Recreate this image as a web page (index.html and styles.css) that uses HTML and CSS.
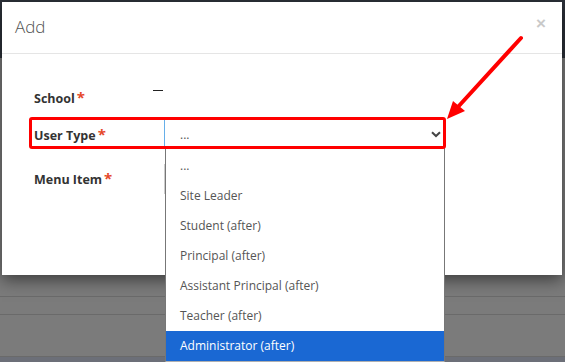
FILE: index.html
```html
<!DOCTYPE html>
<html lang="en">
<head>
    <meta charset="UTF-8">
    <meta name="viewport" content="width=device-width, initial-scale=1.0">
    <title>Add</title>
    <link rel="stylesheet" href="styles.css">
</head>
<body>
    <div class="page">
        <div class="modal">
            <div class="modal-header">
                <h4>Add</h4>
                <button class="close">&times;</button>
            </div>
            <div class="modal-body">
                <div class="form-row row-school">
                    <label>School<span class="req">*</span></label>
                    <div class="field"><span class="value-dash"></span></div>
                </div>
                <div class="form-row row-type">
                    <label>User Type<span class="req">*</span></label>
                    <div class="field">
                        <div class="select">
                            <span>...</span>
                            <svg class="chevron" width="10" height="7" viewBox="0 0 10 7">
                                <path d="M1 1.2 L5 5 L9 1.2" fill="none" stroke="#444" stroke-width="2"/>
                            </svg>
                        </div>
                    </div>
                </div>
                <div class="form-row row-menu">
                    <label>Menu Item<span class="req">*</span></label>
                    <div class="field"><div class="input"></div></div>
                </div>
            </div>
        </div>

        <div class="bg-rows">
            <div class="bg-row r1"></div>
            <div class="bg-row r2"></div>
            <div class="bg-row r3"></div>
        </div>

        <!-- open dropdown of the User Type select -->
        <ul class="dropdown">
            <li>...</li>
            <li>Site Leader</li>
            <li>Student (after)</li>
            <li>Principal (after)</li>
            <li>Assistant Principal (after)</li>
            <li>Teacher (after)</li>
            <li class="selected">Administrator (after)</li>
        </ul>

        <!-- annotation -->
        <div class="highlight"></div>
        <svg class="arrow" width="565" height="362" viewBox="0 0 565 362">
            <line x1="521" y1="38" x2="457" y2="108" stroke="#f00" stroke-width="4" stroke-linecap="round"/>
            <polygon points="447,119 453,101 465,111" fill="#f00"/>
        </svg>
    </div>
</body>
</html>
```

FILE: styles.css
```css
body {
    margin: 0;
    padding: 0;
    font-family: "Open Sans", Arial, sans-serif;
    background: #7b7b7b;
}
.page {
    position: relative;
    width: 565px;
    height: 362px;
    overflow: hidden;
    background: linear-gradient(#2c3139 0, #2c3139 58px, #7b7b7b 58px);
}
.modal {
    position: relative;
    z-index: 2;
    margin: 2px 3px 0 2px;
    height: 273px;
    background-color: #fff;
    box-shadow: 0 5px 15px rgba(0, 0, 0, 0.5);
}
.modal-header {
    display: flex;
    justify-content: space-between;
    align-items: flex-start;
    height: 51px;
    padding: 0 16px 0 13px;
    border-bottom: 1px solid #e5e5e5;
}
.modal-header h4 {
    margin: 13px 0 0 0;
    font-size: 17px;
    font-weight: 300;
    color: #555;
    line-height: 24px;
}
.close {
    margin-top: 12px;
    padding: 0;
    border: none;
    background: none;
    font-family: Arial, sans-serif;
    font-size: 17px;
    font-weight: bold;
    color: #c9c9c9;
    line-height: 20px;
}
.modal-body {
    padding: 29px 0 0 32px;
}
.form-row {
    display: flex;
    height: 28px;
    align-items: center;
}
.row-school {
    margin-bottom: 9px;
}
.row-type {
    margin-bottom: 16px;
}
.form-row label {
    width: 130px;
    font-size: 12.5px;
    font-weight: bold;
    color: #333;
}
.req {
    color: #e5482a;
    margin-left: 2px;
    font-size: 15px;
}
.field {
    flex: 1;
    height: 100%;
    margin-right: 117px;
}
.value-dash {
    display: block;
    width: 10px;
    height: 1px;
    margin: 7px 0 0 -11px;
    background-color: #222;
}
.select {
    display: flex;
    justify-content: space-between;
    align-items: center;
    height: 28px;
    box-sizing: border-box;
    padding: 0 4px 0 15px;
    border-left: 1px solid #66afe9;
    font-size: 12px;
    color: #555;
}
.input {
    height: 30px;
    box-sizing: border-box;
    border: 1px solid #ccc;
    border-width: 1px 1px 1px 2px;
}
.bg-row {
    border-bottom: 1px solid #6a6a6a;
}
.r1 { height: 21px; }
.r2 { height: 17px; }
.r3 { height: 41px; }
.bg-rows::after {
    content: "";
    display: block;
    height: 10px;
    background-color: #6c6f78;
}
.dropdown {
    position: absolute;
    z-index: 3;
    left: 165px;
    top: 148px;
    width: 280px;
    box-sizing: border-box;
    margin: 0;
    padding: 3px 0 0 0;
    list-style: none;
    background-color: #fff;
    border-left: 1px solid #777;
    border-right: 1px solid #777;
    border-bottom: 1px solid #b0b0b0;
}
.dropdown li {
    height: 30px;
    line-height: 30px;
    padding-left: 14px;
    font-size: 12px;
    color: #555;
}
.dropdown li.selected {
    background-color: #1a68d3;
    color: #fff;
}
.highlight {
    position: absolute;
    z-index: 4;
    left: 29px;
    top: 117px;
    width: 417px;
    height: 32px;
    box-sizing: border-box;
    border: 3px solid #f00;
    border-radius: 3px;
}
.arrow {
    position: absolute;
    z-index: 5;
    left: 0;
    top: 0;
}
```
